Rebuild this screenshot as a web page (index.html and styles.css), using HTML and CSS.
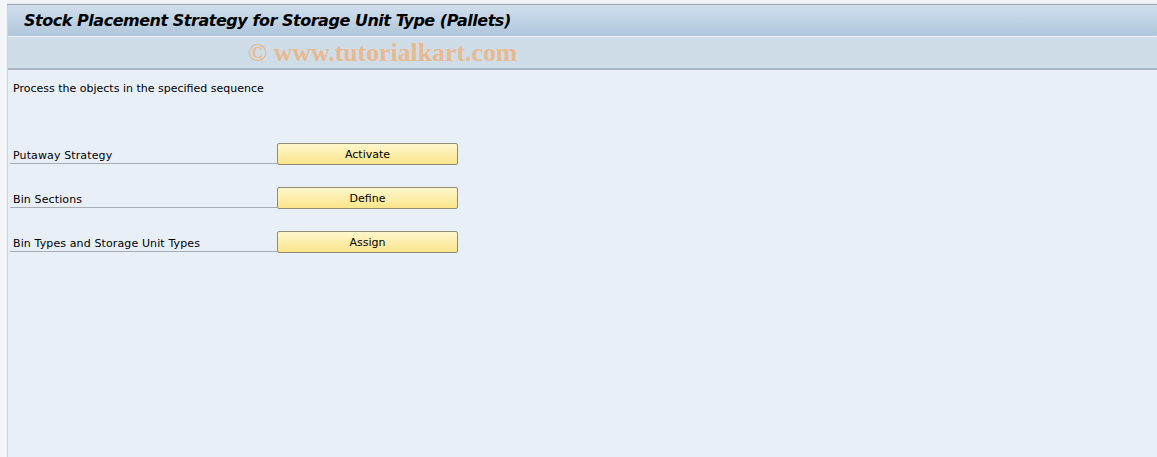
FILE: index.html
```html
<!DOCTYPE html>
<html>
<head>
<meta charset="utf-8">
<link rel="stylesheet" href="styles.css">
</head>
<body>
<div class="screen">
  <div class="topstrip"></div>
  <div class="frame">
    <div class="titlebar"><h1 class="title">Stock Placement Strategy for Storage Unit Type (Pallets)</h1></div>
    <div class="toolbar"><span class="watermark">© www.tutorialkart.com</span></div>
    <div class="content">
      <p class="intro">Process the objects in the specified sequence</p>
      <div class="rows">
        <div class="row"><span class="label">Putaway Strategy</span><button class="btn">Activate</button></div>
        <div class="row"><span class="label">Bin Sections</span><button class="btn">Define</button></div>
        <div class="row"><span class="label">Bin Types and Storage Unit Types</span><button class="btn">Assign</button></div>
      </div>
    </div>
  </div>
</div>
</body>
</html>
```
FILE: styles.css
```css
html, body { margin: 0; padding: 0; }
body { width: 1157px; height: 457px; overflow: hidden; background: #f3f5f9; font-family: Tahoma, "DejaVu Sans", sans-serif; }
.screen { display: flex; flex-direction: column; height: 457px; }
.topstrip { height: 4px; background: linear-gradient(#f6f7fa, #e9ecf2); border-bottom: 1px solid #9ea7b6; margin-left: 7px; }
.frame { flex: 1; display: flex; flex-direction: column; margin-left: 7px; border-left: 1px solid #c9d0da; }
.titlebar { height: 31px; background: linear-gradient(#d1dfec, #b0c6dc); border-bottom: 1px solid #f2f6fa; display: flex; align-items: center; }
.title { margin: 0 0 0 16px; font-family: "DejaVu Sans", sans-serif; font-weight: bold; font-style: italic; font-size: 16px; color: #000; letter-spacing: -0.47px; }
.toolbar { height: 31px; background: #cfdde8; border-bottom: 2px solid #a9b5c2; display: flex; align-items: center; }
.watermark { margin-left: 240px; font-family: "Liberation Serif", serif; font-weight: bold; font-size: 25.8px; color: #e9b98f; }
.content { flex: 1; background: #e8eff7; padding: 0 0 0 2px; }
.intro { margin: 12px 0 0 3px; font-family: "DejaVu Sans", sans-serif; font-size: 11px; color: #000; }
.rows { display: flex; flex-direction: column; gap: 22px; margin-top: 47px; }
.row { display: flex; align-items: flex-end; height: 22px; }
.label { width: 267px; box-sizing: border-box; padding-left: 3px; border-bottom: 1px solid #a8adb3; font-family: "DejaVu Sans", sans-serif; font-size: 11px; letter-spacing: 0.12px; line-height: 15px; color: #000; }
.btn { width: 181px; height: 22px; margin: 0 0 -1px 0; padding: 0; border: 1px solid #8f8c7c; border-radius: 2px; background: linear-gradient(#fff7cc, #fbe58c); font-family: "DejaVu Sans", sans-serif; font-size: 11px; color: #000; }
```
